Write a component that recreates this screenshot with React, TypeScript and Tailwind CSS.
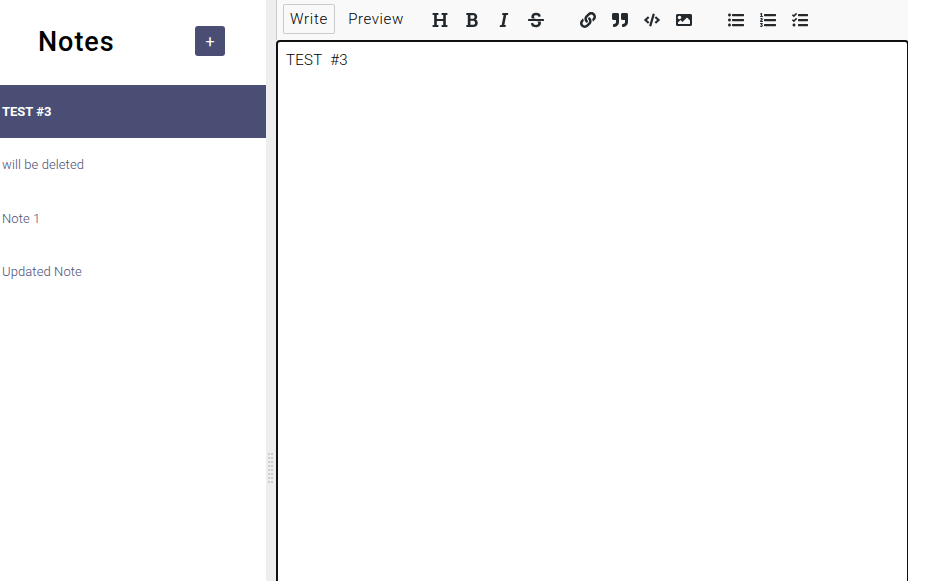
import React from "react";
import { FaLink, FaQuoteRight, FaCode, FaImage } from "react-icons/fa";

function Glyph({ box, d }: { box: number; d: string }) {
  return (
    <svg width="16" height="16" viewBox={`0 0 ${box} 512`} fill="currentColor">
      <path d={d} />
    </svg>
  );
}

const bars =
  "M144 132h352c8.837 0 16-7.163 16-16V76c0-8.837-7.163-16-16-16H144c-8.837 0-16 7.163-16 16v40c0 8.837 7.163 16 16 16zm0 160h352c8.837 0 16-7.163 16-16v-40c0-8.837-7.163-16-16-16H144c-8.837 0-16 7.163-16 16v40c0 8.837 7.163 16 16 16zm0 160h352c8.837 0 16-7.163 16-16v-40c0-8.837-7.163-16-16-16H144c-8.837 0-16 7.163-16 16v40c0 8.837 7.163 16 16 16z";

const heading =
  "M496 80V48c0-8.837-7.163-16-16-16H320c-8.837 0-16 7.163-16 16v32c0 8.837 7.163 16 16 16h37.621v128H154.379V96H192c8.837 0 16-7.163 16-16V48c0-8.837-7.163-16-16-16H32c-8.837 0-16 7.163-16 16v32c0 8.837 7.163 16 16 16h37.275v320H32c-8.837 0-16 7.163-16 16v32c0 8.837 7.163 16 16 16h160c8.837 0 16-7.163 16-16v-32c0-8.837-7.163-16-16-16h-37.621V288H357.62v128H320c-8.837 0-16 7.163-16 16v32c0 8.837 7.163 16 16 16h160c8.837 0 16-7.163 16-16v-32c0-8.837-7.163-16-16-16h-37.275V96H480c8.837 0 16-7.163 16-16z";

const bold =
  "M304.793 243.891c33.639-18.537 53.657-54.16 53.657-95.693 0-48.236-26.25-87.626-68.626-104.179C265.138 34.01 240.849 32 209.661 32H24c-8.837 0-16 7.163-16 16v33.113c0 8.837 7.163 16 16 16h33.113v318.53H24c-8.837 0-16 7.163-16 16V464c0 8.837 7.163 16 16 16h195.69c24.203 0 44.834-1.289 66.866-7.584C337.52 457.193 376 410.647 376 350.014c0-52.168-26.573-91.684-71.207-106.123zM142.217 100.809h67.444c16.294 0 27.536 2.019 37.525 6.717 15.828 8.479 24.906 26.502 24.906 49.446 0 35.029-20.32 56.79-53.029 56.79h-76.846V100.809zm112.642 305.475c-10.14 4.056-22.677 4.907-31.409 4.907h-81.233V281.943h84.367c39.645 0 63.057 25.38 63.057 63.728 0 28.349-12.875 52.12-34.782 60.613z";

const italic =
  "M204.758 416h-33.849l62.092-320h40.725a16 16 0 0 0 15.704-12.937l6.242-32C297.599 41.184 290.034 32 279.968 32H120.235a16 16 0 0 0-15.704 12.937l-6.242 32C96.362 86.816 103.927 96 113.993 96h33.846l-62.09 320H46.278a16 16 0 0 0-15.704 12.935l-6.245 32C22.402 470.815 29.967 480 40.034 480h158.479a16 16 0 0 0 15.704-12.935l6.245-32c1.927-9.88-5.638-19.065-15.704-19.065z";

const strike =
  "M496 288H16c-8.837 0-16-7.163-16-16v-32c0-8.837 7.163-16 16-16h480c8.837 0 16 7.163 16 16v32c0 8.837-7.163 16-16 16zm-214.666 16c27.258 12.937 46.524 28.683 46.524 56.243 0 33.108-28.977 53.676-75.621 53.676-32.325 0-76.874-12.08-76.874-44.271V368c0-8.837-7.164-16-16-16H113.75c-8.836 0-16 7.163-16 16v19.204c0 66.845 77.717 101.82 154.487 101.82 88.578 0 162.013-45.438 162.013-134.424 0-19.815-3.618-36.417-10.143-50.6H281.334zm-30.952-96c-32.422-13.505-56.836-28.946-56.836-59.683 0-33.92 30.901-47.406 64.962-47.406 42.647 0 64.962 16.593 64.962 32.985V136c0 8.837 7.163 16 16 16h45.613c8.836 0 16-7.163 16-16v-30.318c0-52.438-71.725-79.875-142.575-79.875-85.203 0-150.726 40.972-150.726 125.646 0 22.71 4.665 41.176 12.777 56.547h129.823z";

const bullets =
  "M96 96c0 26.51-21.49 48-48 48S0 122.51 0 96s21.49-48 48-48 48 21.49 48 48zM48 208c-26.51 0-48 21.49-48 48s21.49 48 48 48 48-21.49 48-48-21.49-48-48-48zm0 160c-26.51 0-48 21.49-48 48s21.49 48 48 48 48-21.49 48-48-21.49-48-48-48z";

const digits =
  "M3.263 139.527c0-7.477 3.917-11.572 11.573-11.572h15.131V88.078c0-5.163.534-10.503.534-10.503h-.356s-1.779 2.67-2.848 3.738c-4.451 4.273-10.504 4.451-15.666-1.068l-5.518-6.231c-5.342-5.341-4.984-11.216.534-16.379l21.72-19.938C32.815 33.602 36.732 32 42.785 32H54.89c7.656 0 11.749 3.916 11.749 11.572v84.384h15.488c7.655 0 11.572 4.094 11.572 11.572v8.901c0 7.477-3.917 11.572-11.572 11.572H14.836c-7.656 0-11.573-4.095-11.573-11.572v-8.902zM2.211 304.591c0-47.278 50.955-56.383 50.955-69.165 0-7.18-5.954-8.755-9.28-8.755-3.153 0-6.479 1.051-9.455 3.852-5.079 4.903-10.507 7.004-16.111 2.451l-8.579-6.829c-5.779-4.553-7.18-9.805-2.803-15.409C13.592 201.981 26.025 192 47.387 192c19.437 0 44.476 10.506 44.476 39.573 0 38.347-46.753 46.402-48.679 56.909h39.049c7.529 0 11.557 4.027 11.557 11.382v8.755c0 7.354-4.028 11.382-11.557 11.382h-67.94c-7.005 0-12.083-4.028-12.083-11.382v-4.028zM5.654 454.61l5.603-9.28c3.853-6.654 9.105-7.004 15.584-3.152 4.903 2.101 9.63 3.152 14.359 3.152 10.155 0 14.358-3.502 14.358-8.23 0-6.654-5.604-9.106-15.934-9.106h-4.728c-5.954 0-9.28-2.101-12.258-7.88l-1.05-1.926c-2.451-4.728-1.226-9.806 2.801-14.884l5.604-7.004c6.829-8.405 12.257-13.483 12.257-13.483v-.35s-4.203 1.051-12.608 1.051H16.685c-7.53 0-11.383-4.028-11.383-11.382v-8.755c0-7.53 3.853-11.382 11.383-11.382h58.484c7.529 0 11.382 4.027 11.382 11.382v3.327c0 5.778-1.401 9.806-5.079 14.183l-17.509 20.137c19.611 5.078 28.716 20.487 28.716 34.845 0 21.363-14.358 44.126-48.503 44.126-16.636 0-28.192-4.728-35.896-9.455-5.779-4.202-6.304-9.805-2.626-15.934z";

const tasks =
  "M208 132h288c8.8 0 16-7.2 16-16V76c0-8.8-7.2-16-16-16H208c-8.8 0-16 7.2-16 16v40c0 8.8 7.2 16 16 16zm0 160h288c8.8 0 16-7.2 16-16v-40c0-8.8-7.2-16-16-16H208c-8.8 0-16 7.2-16 16v40c0 8.8 7.2 16 16 16zm0 160h288c8.8 0 16-7.2 16-16v-40c0-8.8-7.2-16-16-16H208c-8.8 0-16 7.2-16 16v40c0 8.8 7.2 16 16 16zM64 368c-26.5 0-48.6 21.5-48.6 48s22.1 48 48.6 48 48-21.5 48-48-21.5-48-48-48zm92.5-299l-72.2 72.2-15.6 15.6c-4.7 4.7-12.9 4.7-17.6 0L3.5 109.4c-4.7-4.7-4.7-12.3 0-17l15.7-15.7c4.7-4.7 12.3-4.7 17 0l22.7 22.1 63.7-63.3c4.7-4.7 12.3-4.7 17 0l17 16.5c4.6 4.7 4.6 12.3-.1 17zm0 159.6l-72.2 72.2-15.7 15.7c-4.7 4.7-12.9 4.7-17.6 0L3.5 269c-4.7-4.7-4.7-12.3 0-17l15.7-15.7c4.7-4.7 12.3-4.7 17 0l22.7 22.1 63.7-63.7c4.7-4.7 12.3-4.7 17 0l17 17c4.6 4.6 4.6 12.2-.1 16.9z";

const groups = [
  [<Glyph box={512} d={heading} />, <Glyph box={384} d={bold} />, <Glyph box={320} d={italic} />, <Glyph box={512} d={strike} />],
  [<FaLink size={16} />, <FaQuoteRight size={16} />, <FaCode size={16} />, <FaImage size={16} />],
  [<Glyph box={512} d={bullets + bars} />, <Glyph box={512} d={digits + bars} />, <Glyph box={512} d={tasks} />],
];

const notes = ["will be deleted", "Note 1", "Updated Note"];

export default function App() {
  return (
    <div className="flex h-[581px] w-[928px] overflow-hidden bg-white font-['Roboto',sans-serif]">
      <aside className="w-[266px] shrink-0">
        <header className="flex h-[85px] items-start justify-between pt-[26px] pr-[41px] pl-[38px]">
          <h1 className="pt-px text-[27px] leading-[30px] font-medium tracking-[0.95px] text-black">Notes</h1>
          <button className="flex h-[30px] w-[30px] items-center justify-center rounded-[3px] bg-[#4a4e74] pt-[2px] text-[16px] leading-none text-white">+</button>
        </header>
        <div className="flex h-[53px] items-center bg-[#4a4e74] pl-[2px] text-[13px] font-bold text-white">TEST #3</div>
        {notes.map((n) => (
          <div key={n} className="flex h-[53.4px] items-center pt-px pl-[2px] text-[13px] font-[350] tracking-[0.1px] text-[#4a4e74]">{n}</div>
        ))}
      </aside>
      <div className="flex w-[10px] shrink-0 flex-col bg-[#eeeeee] pt-[453px] pl-[2px]">
        {[0, 1, 2, 3, 4, 5, 6, 7].map((i) => (
          <div key={i} className="mb-[2px] flex gap-[1px]">
            <span className="h-[2px] w-[2px] bg-[#cccccc]" />
            <span className="h-[2px] w-[2px] bg-[#cccccc]" />
          </div>
        ))}
      </div>
      <main className="flex w-[632px] shrink-0 flex-col overflow-hidden bg-[#f9f9f9]">
        <div className="flex h-10 shrink-0 items-start border-l border-[#c8ccd0] pt-1 pl-[6px] text-[#24292e]">
          <button className="flex h-[30px] w-[52px] items-center justify-center rounded-[2px] border border-[#c8ccd0] text-[15px] font-[350] tracking-[0.75px] text-black">Write</button>
          <button className="ml-[5px] flex h-[30px] w-[72px] items-center justify-center text-[15px] font-[350] tracking-[0.6px] text-black">Preview</button>
          <div className="ml-5 flex h-8 gap-9">
            {groups.map((g, i) => (
              <div key={i} className="flex gap-4">
                {g.map((icon, j) => (
                  <span key={j} className="flex w-4 items-center justify-center">{icon}</span>
                ))}
              </div>
            ))}
          </div>
        </div>
        <div className="h-[560px] w-[633px] shrink-0 rounded-[4px] border-2 border-[#101010] bg-white pt-[8px] pl-[8px] text-[15px] leading-[20px] font-[350] tracking-[0.3px] whitespace-pre text-black">TEST  #3</div>
      </main>
    </div>
  );
}
